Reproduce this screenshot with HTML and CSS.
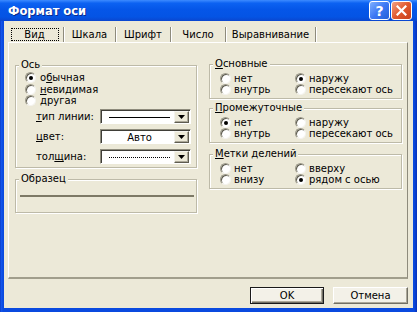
FILE: index.html
```html
<!DOCTYPE html>
<html lang="ru">
<head>
<meta charset="utf-8">
<title>Формат оси</title>
<link rel="stylesheet" href="styles.css">
</head>
<body>
<div class="win">
  <div class="title">
    <span class="ttext">Формат оси</span>
    <div class="tbtns">
      <span class="tb help">?</span>
      <span class="tb close"><svg width="11" height="11" viewBox="0 0 11 11"><path d="M1.5 1.5 L9.5 9.5 M9.5 1.5 L1.5 9.5" stroke="#fff" stroke-width="2.2" stroke-linecap="square"/></svg></span>
    </div>
  </div>
  <div class="dlg">
    <div class="tabs">
      <div class="tab t1"><span class="focus">Вид</span></div>
      <div class="tab t2">Шкала</div>
      <div class="tab t3">Шрифт</div>
      <div class="tab t4">Число</div>
      <div class="tab t5">Выравнивание</div>
    </div>
    <div class="panel">
      <div class="col colL">
        <div class="group gAxis">
          <div class="cap">Ось</div>
          <div class="rows">
            <div class="r"><span class="rb on"></span>о<u>б</u>ычная</div>
            <div class="r"><span class="rb"></span><u>н</u>евидимая</div>
            <div class="r"><span class="rb"></span>другая</div>
          </div>
          <div class="fields">
            <div class="f"><span class="fl"><u>т</u>ип линии:</span>
              <div class="combo"><div class="cv"><span class="solid"></span></div><span class="dd"><svg width="7" height="4" viewBox="0 0 7 4"><polygon points="0,0 7,0 3.5,4" fill="#000"/></svg></span></div>
            </div>
            <div class="f"><span class="fl"><u>ц</u>вет:</span>
              <div class="combo"><div class="cv">Авто</div><span class="dd"><svg width="7" height="4" viewBox="0 0 7 4"><polygon points="0,0 7,0 3.5,4" fill="#000"/></svg></span></div>
            </div>
            <div class="f"><span class="fl">тол<u>щ</u>ина:</span>
              <div class="combo"><div class="cv"><span class="dots"></span></div><span class="dd"><svg width="7" height="4" viewBox="0 0 7 4"><polygon points="0,0 7,0 3.5,4" fill="#000"/></svg></span></div>
            </div>
          </div>
        </div>
        <div class="group gSample">
          <div class="cap">Образец</div>
          <div class="sline"></div>
        </div>
      </div>
      <div class="col colR">
        <div class="group gR">
          <div class="cap"><u>О</u>сновные</div>
          <div class="grid">
            <div class="r"><span class="rb"></span>нет</div>
            <div class="r"><span class="rb on"></span>наружу</div>
            <div class="r"><span class="rb"></span>внутрь</div>
            <div class="r"><span class="rb"></span>пересекают ось</div>
          </div>
        </div>
        <div class="group gR g2">
          <div class="cap"><u>П</u>ромежуточные</div>
          <div class="grid">
            <div class="r"><span class="rb on"></span>нет</div>
            <div class="r"><span class="rb"></span>наружу</div>
            <div class="r"><span class="rb"></span>внутрь</div>
            <div class="r"><span class="rb"></span>пересекают ось</div>
          </div>
        </div>
        <div class="group gR g3">
          <div class="cap"><u>М</u>етки делений</div>
          <div class="grid">
            <div class="r"><span class="rb"></span>нет</div>
            <div class="r"><span class="rb"></span>вверху</div>
            <div class="r"><span class="rb"></span>внизу</div>
            <div class="r"><span class="rb on"></span>рядом с осью</div>
          </div>
        </div>
      </div>
    </div>
    <div class="btns">
      <button class="btn def">OK</button>
      <button class="btn cancel">Отмена</button>
    </div>
  </div>
</div>
</body>
</html>
```
FILE: styles.css
```css
* { box-sizing: border-box; margin: 0; padding: 0; }
html, body { width: 417px; height: 312px; overflow: hidden; }
body {
  font-family: "DejaVu Sans", sans-serif;
  font-size: 10px;
  color: #000;
  background: #0A48DD;
}
u { text-decoration: underline; text-underline-offset: 1px; }

.win {
  width: 417px;
  height: 312px;
  display: flex;
  flex-direction: column;
  background: linear-gradient(to right, #0831B8 0, #1558EE 1px, #0A4ADF 3px, #0A4ADF 414px, #0831B8 417px);
}

/* title bar */
.title {
  height: 21px;
  display: flex;
  align-items: center;
  padding: 0 5px 0 8px;
  color: #fff;
  background: linear-gradient(#3D8BFF 0%, #0C62F2 15%, #0556E8 45%, #0454E4 80%, #0A46CF 100%);
}
.ttext {
  flex: 1;
  font-family: "DejaVu Sans", sans-serif;
  font-weight: bold;
  font-size: 11.5px;
  padding-top: 1px;
  text-shadow: 1px 1px 0 #0A2C8E;
}
.tbtns { display: flex; gap: 1px; }
.tb {
  width: 21px;
  height: 19px;
  border: 1px solid #fff;
  border-radius: 3px;
  display: flex;
  align-items: center;
  justify-content: center;
  color: #fff;
  font-weight: bold;
  font-size: 14px;
  font-family: "DejaVu Sans", sans-serif;
}
.help { background: linear-gradient(135deg, #7DB0FF 0%, #3C78F4 50%, #245ED8 100%); }
.close { background: linear-gradient(135deg, #F3A285 0%, #E0582E 50%, #C8401A 100%); }

/* dialog body */
.dlg {
  flex: 1;
  margin: 0 4px 4px 4px;
  background: #ECE9D8;
  display: flex;
  flex-direction: column;
  padding-top: 6px;
}

.tabs {
  display: flex;
  height: 15px;
  margin-left: 4px;
}
.tab {
  height: 15px;
  display: flex;
  align-items: center;
  justify-content: center;
  border-right: 1px solid #8E8B7C;
  box-shadow: 1px 0 0 #FFFFFF;
}
.t1 { width: 56px; }
.t2 { width: 52px; }
.t3 { width: 55px; }
.t4 { width: 55px; }
.t5 { width: 90px; }
.focus {
  width: 48px;
  height: 13px;
  margin-left: -2px;
  border: 1px dotted #000;
  display: flex;
  align-items: center;
  justify-content: center;
}

.panel {
  margin-left: 4px;
  width: 400px;
  height: 237px;
  border-top: 1px solid #FFFFFF;
  border-left: 1px solid #FFFFFF;
  border-right: 1px solid #8E8B7C;
  border-bottom: 2px solid #A19E8C;
  display: flex;
  align-items: flex-start;
}

.col { display: flex; flex-direction: column; }
.colL { margin: 22px 0 0 6px; width: 182px; }
.colR { margin: 21px 0 0 12px; width: 193px; }

.group {
  border: 1px solid #BDBAA8;
  box-shadow: 1px 1px 0 #FFFFFF, inset 1px 1px 0 #FFFFFF;
}
.cap {
  width: fit-content;
  height: 12px;
  line-height: 12px;
  margin: -7px 0 0 3px;
  padding: 0 2px;
  background: #ECE9D8;
}

.gAxis { padding-bottom: 3px; }
.rows { margin-top: 1px; }
.r {
  display: flex;
  align-items: center;
  white-space: nowrap;
  height: 11.5px;
}
.gAxis .r { padding-left: 9px; }
.rb {
  width: 11px;
  height: 11px;
  flex: none;
  border-radius: 50%;
  background: #fff;
  border: 1px solid;
  border-color: #9D9A8A #F4F3EE #F4F3EE #9D9A8A;
  box-shadow: inset 1px 1px 0 #5E5C50;
  margin-right: 4px;
  display: flex;
  align-items: center;
  justify-content: center;
}
.rb.on::after {
  content: "";
  width: 4px;
  height: 4px;
  border-radius: 50%;
  background: #000;
  margin: 1px 0 0 1px;
}

.fields {
  margin-top: 2.5px;
  display: flex;
  flex-direction: column;
  gap: 5px;
}
.f { display: flex; align-items: center; height: 15px; }
.fl { width: 84px; padding-left: 20px; white-space: nowrap; }
.combo {
  width: 91px;
  height: 15px;
  display: flex;
  background: #fff;
  border: 1px solid;
  border-color: #8E8B7C #FFFFFF #FFFFFF #8E8B7C;
  box-shadow: inset 1px 1px 0 #3F3E38;
  padding: 1px 1px 0 1px;
}
.cv {
  flex: 1;
  display: flex;
  align-items: center;
  justify-content: center;
  padding: 0 4px 0 7px;
}
.solid { flex: 1; height: 1px; background: #000; }
.dots { flex: 1; height: 1px; background: repeating-linear-gradient(to right, #000 0 1px, transparent 1px 2px); }
.dd {
  width: 15px;
  height: 12px;
  flex: none;
  display: flex;
  align-items: center;
  justify-content: center;
  background: #ECE9D8;
  border: 1px solid;
  border-color: #F4F3EE #5E5C50 #5E5C50 #F4F3EE;
  box-shadow: inset -1px -1px 0 #ACA899;
}

.gSample { margin-top: 11px; height: 34px; }
.sline { height: 2px; margin: 10px 2px 0 4px; background: #7D7966; }

.gR { padding-bottom: 3px; }
.g2 { margin-top: 9px; }
.g3 { margin-top: 11px; }
.grid {
  display: grid;
  grid-template-columns: 75px 1fr;
  margin-top: 3px;
  padding-left: 10px;
}
.gR .rb { margin-right: 3px; }
.gR .r { height: 11px; }

.btns {
  display: flex;
  justify-content: flex-end;
  gap: 9px;
  margin-top: 8px;
  padding-right: 5px;
}
.btn {
  height: 17px;
  font-family: "DejaVu Sans", sans-serif;
  font-size: 10px;
  color: #000;
  background: #F3F1E8;
  border: 1px solid;
  border-color: #FFFFFF #716F64 #716F64 #FFFFFF;
  box-shadow: inset -1px -1px 0 #ACA899;
}
.def {
  width: 74px;
  border-color: #1A1A1A;
  box-shadow: inset 1px 1px 0 #FFFFFF, inset -1px -1px 0 #716F64, inset -2px -2px 0 #ACA899;
}
.cancel { width: 75px; }
```
